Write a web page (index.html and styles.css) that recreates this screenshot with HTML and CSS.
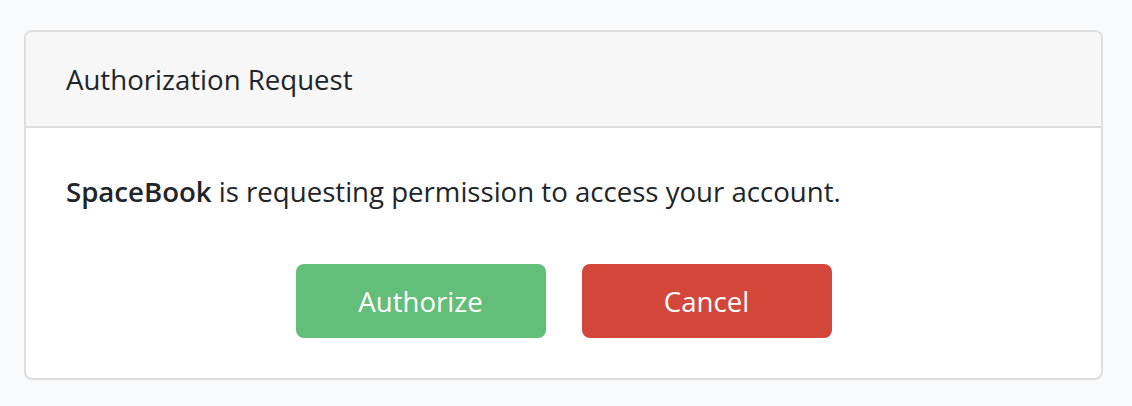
FILE: index.html
```html
<!DOCTYPE html>
<html lang="en">
<head>
<meta charset="utf-8">
<title>Authorization Request</title>
<link rel="stylesheet" href="styles.css">
</head>
<body>
<div class="page">
  <div class="card">
    <div class="card-header">Authorization Request</div>
    <div class="card-body">
      <p class="lead"><strong>SpaceBook</strong> is requesting permission to access your account.</p>
      <div class="buttons">
        <form class="inline-form"><button type="button" class="btn btn-approve">Authorize</button></form>
        <form class="inline-form"><button type="button" class="btn btn-deny">Cancel</button></form>
      </div>
    </div>
  </div>
</div>
</body>
</html>
```
FILE: styles.css
```css
html, body {
  margin: 0;
  padding: 0;
}
body {
  background: #f8fafc;
  font-family: "Open Sans", "Noto Sans", sans-serif;
  font-size: 27.6px;
  color: #212529;
}
.page {
  padding: 30px 29px 0 24px;
}
.card {
  background: #fff;
  border: 2px solid #dedede;
  border-radius: 8px;
  overflow: hidden;
}
.card-header {
  background: #f7f7f7;
  border-bottom: 2px solid #dedede;
  padding: 24px 40px;
  line-height: 46px;
}
.card-body {
  padding: 40px;
}
.lead {
  margin: 0;
  line-height: 46px;
}
.lead strong {
  font-weight: 600;
}
.buttons {
  margin-top: 50px;
  display: flex;
  justify-content: center;
  gap: 36px;
}
.inline-form {
  margin: 0;
}
.btn {
  width: 250px;
  height: 74px;
  border: none;
  border-radius: 8px;
  color: #fff;
  font-family: inherit;
  font-size: 27.6px;
  font-weight: 500;
  padding: 0;
  cursor: pointer;
}
.btn-approve {
  background: #63be7a;
}
.btn-deny {
  background: #d3473b;
}
```
